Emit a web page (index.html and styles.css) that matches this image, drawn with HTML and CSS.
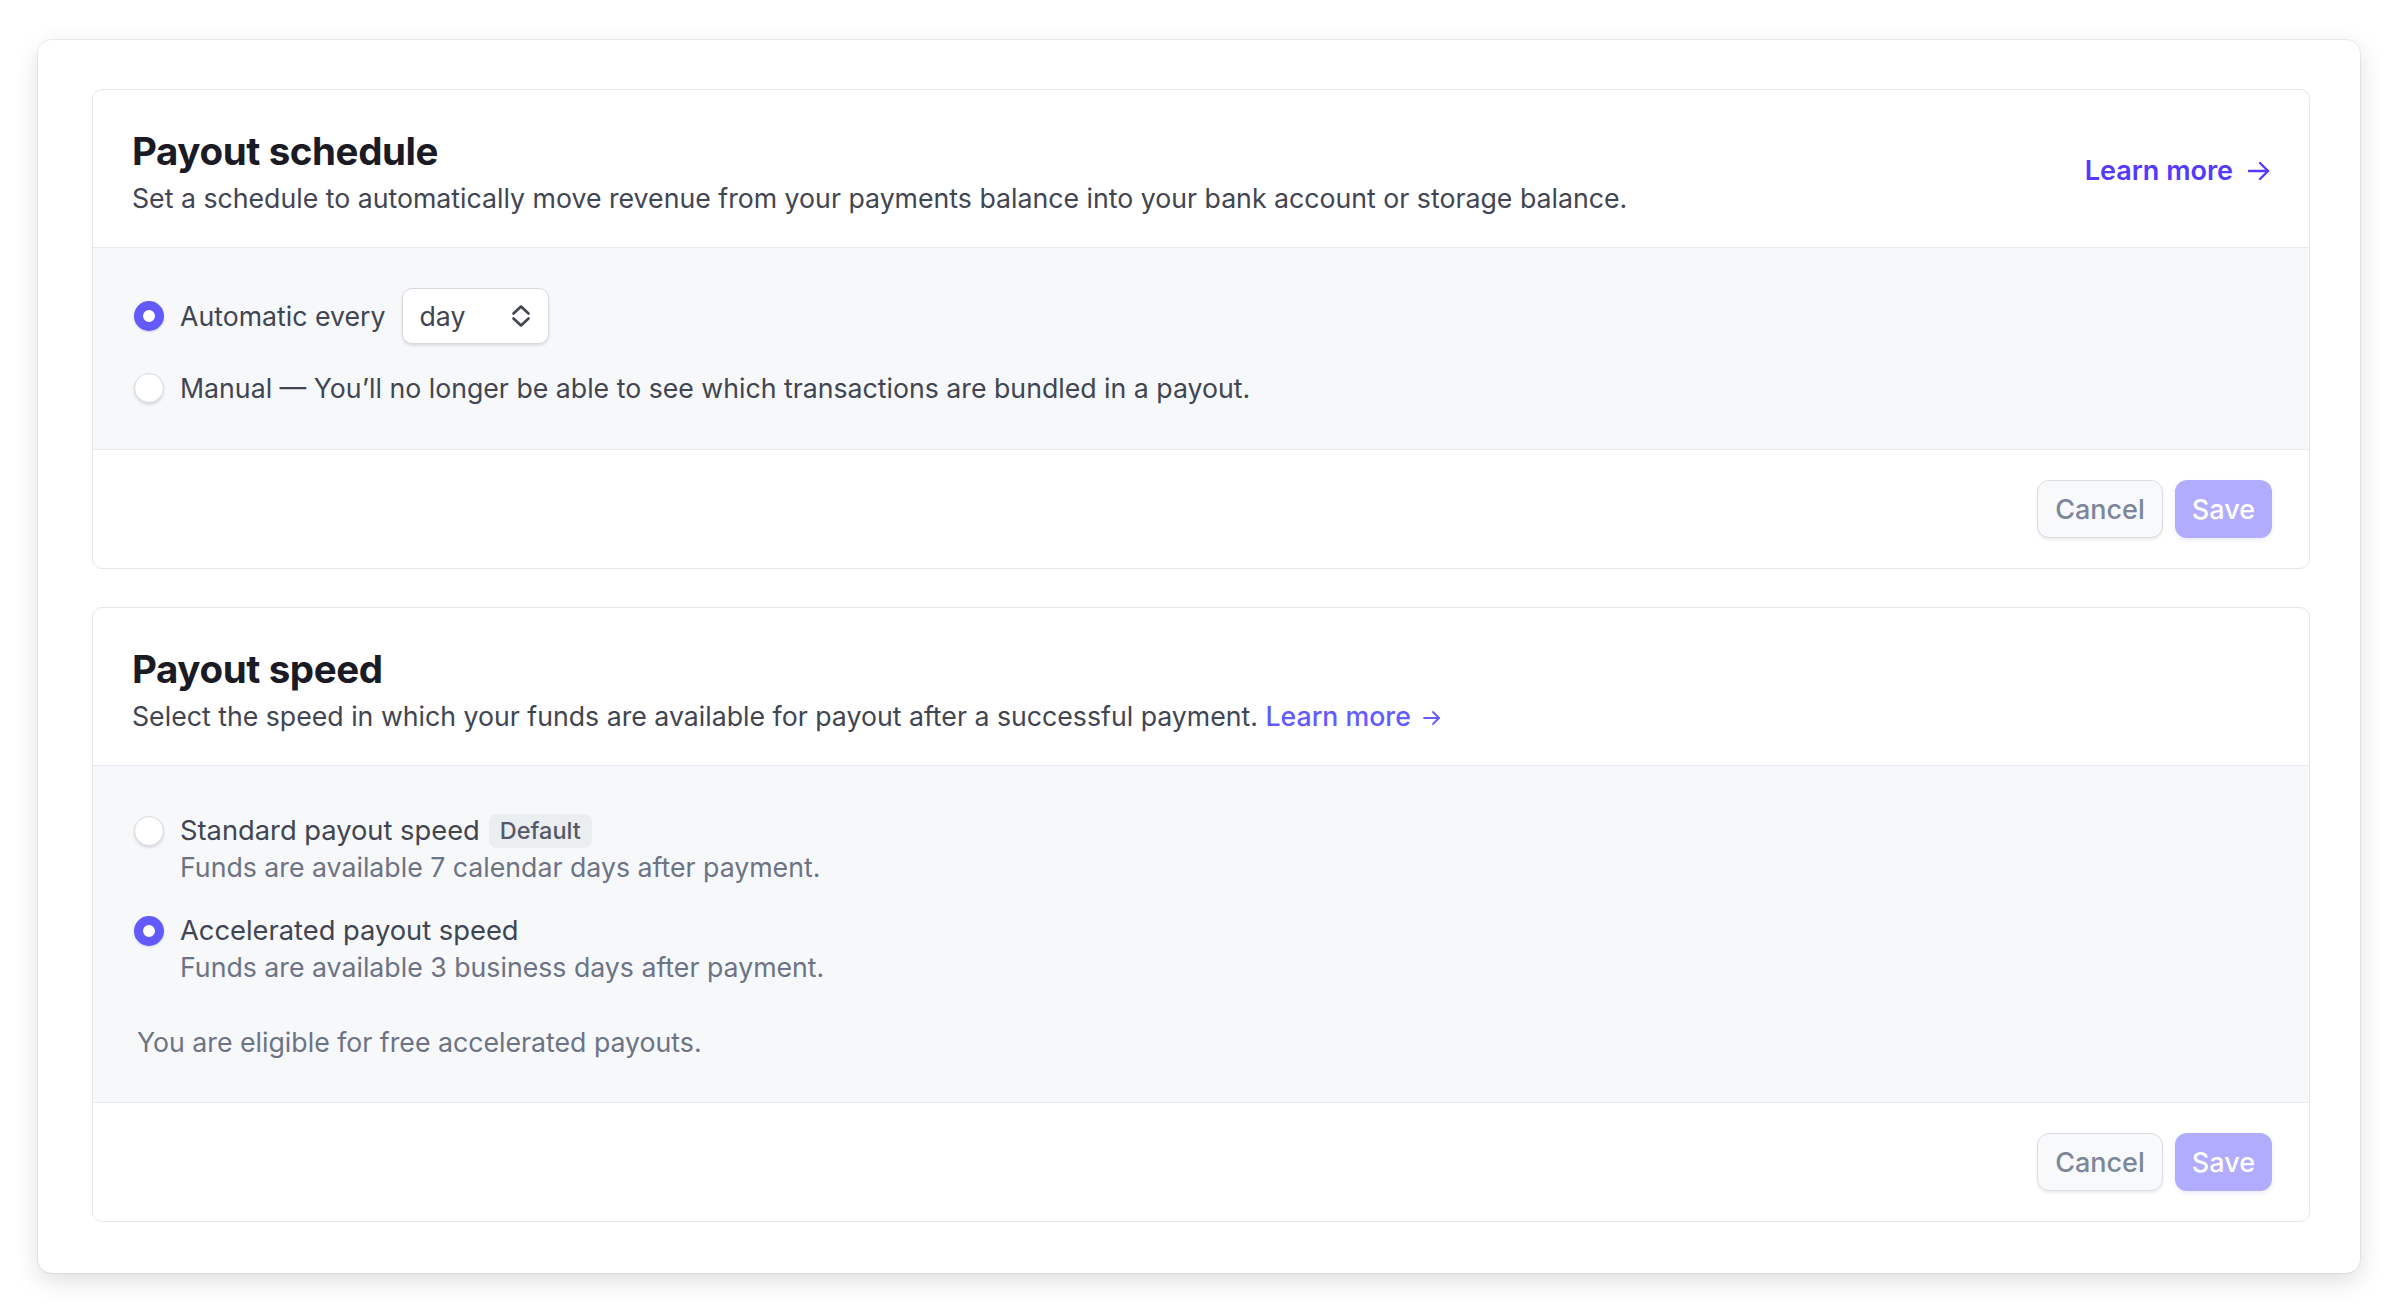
FILE: index.html
```html
<!DOCTYPE html>
<html lang="en">
<head>
    <meta charset="UTF-8">
    <meta name="viewport" content="width=device-width, initial-scale=1.0">
    <title>Payout settings</title>
    <link rel="stylesheet" href="styles.css">
</head>
<body>

    <div class="panel">

        <!-- Payout schedule -->
        <section class="card">
            <div class="card-header">
                <div class="heading">
                    <h2>Payout schedule</h2>
                    <p>Set a schedule to automatically move revenue from your payments balance into your bank account or storage balance.</p>
                </div>
                <a href="#" class="learn-more">
                    Learn more
                    <svg width="24" height="22" viewBox="0 0 24 22" fill="none" stroke="currentColor" stroke-width="2.4" stroke-linecap="round" stroke-linejoin="round">
                        <path d="M2 11h19"/>
                        <path d="M13 3l8 8-8 8"/>
                    </svg>
                </a>
            </div>

            <div class="card-body schedule-body">
                <label class="option">
                    <input type="radio" name="schedule" checked>
                    <span>Automatic every</span>
                    <div class="select">
                        <span>day</span>
                        <svg width="20" height="24" viewBox="0 0 20 24" fill="none" stroke="currentColor" stroke-width="2.6" stroke-linecap="round" stroke-linejoin="round">
                            <path d="M2.5 9.5L10 2.5l7.5 7"/>
                            <path d="M2.5 14.5L10 21.5l7.5-7"/>
                        </svg>
                    </div>
                </label>
                <label class="option">
                    <input type="radio" name="schedule">
                    <span>Manual — You’ll no longer be able to see which transactions are bundled in a payout.</span>
                </label>
            </div>

            <div class="card-footer">
                <button class="btn btn-cancel">Cancel</button>
                <button class="btn btn-save" disabled>Save</button>
            </div>
        </section>

        <!-- Payout speed -->
        <section class="card">
            <div class="card-header">
                <div class="heading">
                    <h2>Payout speed</h2>
                    <p>Select the speed in which your funds are available for payout after a successful payment.
                        <a href="#" class="inline-link">Learn more
                            <svg width="20" height="18" viewBox="0 0 20 18" fill="none" stroke="currentColor" stroke-width="1.8" stroke-linecap="round" stroke-linejoin="round">
                                <path d="M2 9h15"/>
                                <path d="M11 3l6 6-6 6"/>
                            </svg>
                        </a>
                    </p>
                </div>
            </div>

            <div class="card-body speed-body">
                <label class="choice">
                    <input type="radio" name="speed">
                    <div class="choice-text">
                        <div class="choice-label">Standard payout speed <span class="badge">Default</span></div>
                        <div class="choice-sub">Funds are available 7 calendar days after payment.</div>
                    </div>
                </label>
                <label class="choice">
                    <input type="radio" name="speed" checked>
                    <div class="choice-text">
                        <div class="choice-label">Accelerated payout speed</div>
                        <div class="choice-sub">Funds are available 3 business days after payment.</div>
                    </div>
                </label>
                <p class="eligible">You are eligible for free accelerated payouts.</p>
            </div>

            <div class="card-footer">
                <button class="btn btn-cancel">Cancel</button>
                <button class="btn btn-save" disabled>Save</button>
            </div>
        </section>

    </div>

</body>
</html>
```

FILE: styles.css
```css
body {
    margin: 0;
    padding: 40px 40px 40px 38px;
    background-color: #fff;
    font-family: Inter, "Noto Sans", sans-serif;
    color: #414552;
}
.panel {
    background: #fff;
    border-radius: 14px;
    box-shadow: 0 0 0 1px rgba(0,0,0,0.06), 0 8px 24px rgba(0,0,0,0.13);
    padding: 49px 50px 51px 54px;
    display: flex;
    flex-direction: column;
    gap: 38px;
}
.card {
    border: 1px solid #e3e8ee;
    border-radius: 10px;
    overflow: hidden;
    background: #fff;
}
.card-header {
    display: flex;
    align-items: center;
    justify-content: space-between;
    padding: 39px 38px 31px 39px;
    border-bottom: 1px solid #e6ebf1;
}
h2 {
    margin: 0 0 7px;
    font-size: 38.5px;
    line-height: 44px;
    font-weight: 700;
    color: #1a1b25;
    letter-spacing: -0.4px;
}
.heading p {
    margin: 0;
    font-size: 26.7px;
    line-height: 36px;
}
.learn-more {
    display: flex;
    align-items: center;
    gap: 14px;
    color: #533afd;
    font-size: 27px;
    font-weight: 600;
    text-decoration: none;
    margin-bottom: 4px;
}
.inline-link {
    color: #635bff;
    text-decoration: none;
    font-weight: 500;
}
.inline-link svg {
    vertical-align: -1px;
    margin-left: 4px;
}
.card-body {
    background-color: #f6f8fa;
    border-bottom: 1px solid #e6ebf1;
    display: flex;
    flex-direction: column;
}
.schedule-body {
    padding: 40px 40px 43px 41px;
    gap: 26px;
}
.option {
    display: flex;
    align-items: center;
    gap: 16px;
    font-size: 26.7px;
    line-height: 36px;
}
input[type="radio"] {
    appearance: none;
    -webkit-appearance: none;
    flex: none;
    width: 30px;
    height: 30px;
    margin: 0;
    border-radius: 50%;
    background: #fff;
    border: 1px solid #d5dbe1;
    box-shadow: 0 2px 3px rgba(0,0,0,0.12);
    box-sizing: border-box;
}
input[type="radio"]:checked {
    border: 9.5px solid #625afa;
    box-shadow: 0 1px 2px rgba(60,50,200,0.2);
}
.select {
    display: flex;
    align-items: center;
    justify-content: space-between;
    width: 147px;
    height: 56px;
    box-sizing: border-box;
    padding: 0 17px 0 17px;
    background: #fff;
    border: 1px solid #d5dbe1;
    border-radius: 10px;
    box-shadow: 0 2px 3px rgba(0,0,0,0.1);
    color: #414552;
}
.card-footer {
    display: flex;
    justify-content: flex-end;
    gap: 12px;
    padding: 30px 37px 30px;
}
.btn {
    height: 58px;
    padding: 0 17px;
    border-radius: 12px;
    font-family: inherit;
    font-size: 27px;
    font-weight: 500;
    cursor: pointer;
}
.btn-cancel {
    background-color: #f8f9fb;
    border: 1px solid #d8dee4;
    color: #7d8799;
    box-shadow: 0 2px 3px rgba(0,0,0,0.08);
}
.btn-save {
    background-color: #b1acfd;
    border: none;
    color: #fff;
    box-shadow: 0 2px 4px rgba(80,70,200,0.12);
}
.speed-body {
    padding: 46px 40px 41px 41px;
    gap: 26px;
}
.choice {
    display: flex;
    align-items: flex-start;
    gap: 16px;
}
.choice input[type="radio"] {
    margin-top: 4px;
}
.choice-label {
    display: flex;
    align-items: center;
    gap: 9px;
    font-size: 27.3px;
    line-height: 37px;
    color: #414552;
}
.badge {
    font-size: 23.5px;
    line-height: 34px;
    padding: 0 11px;
    background-color: #ebeef1;
    border-radius: 8px;
    font-weight: 500;
    color: #545969;
}
.choice-sub {
    font-size: 26.7px;
    line-height: 37px;
    color: #6c7385;
}
.eligible {
    margin: 12px 0 0 3px;
    font-size: 26.7px;
    line-height: 37px;
    color: #6c7385;
}
```
